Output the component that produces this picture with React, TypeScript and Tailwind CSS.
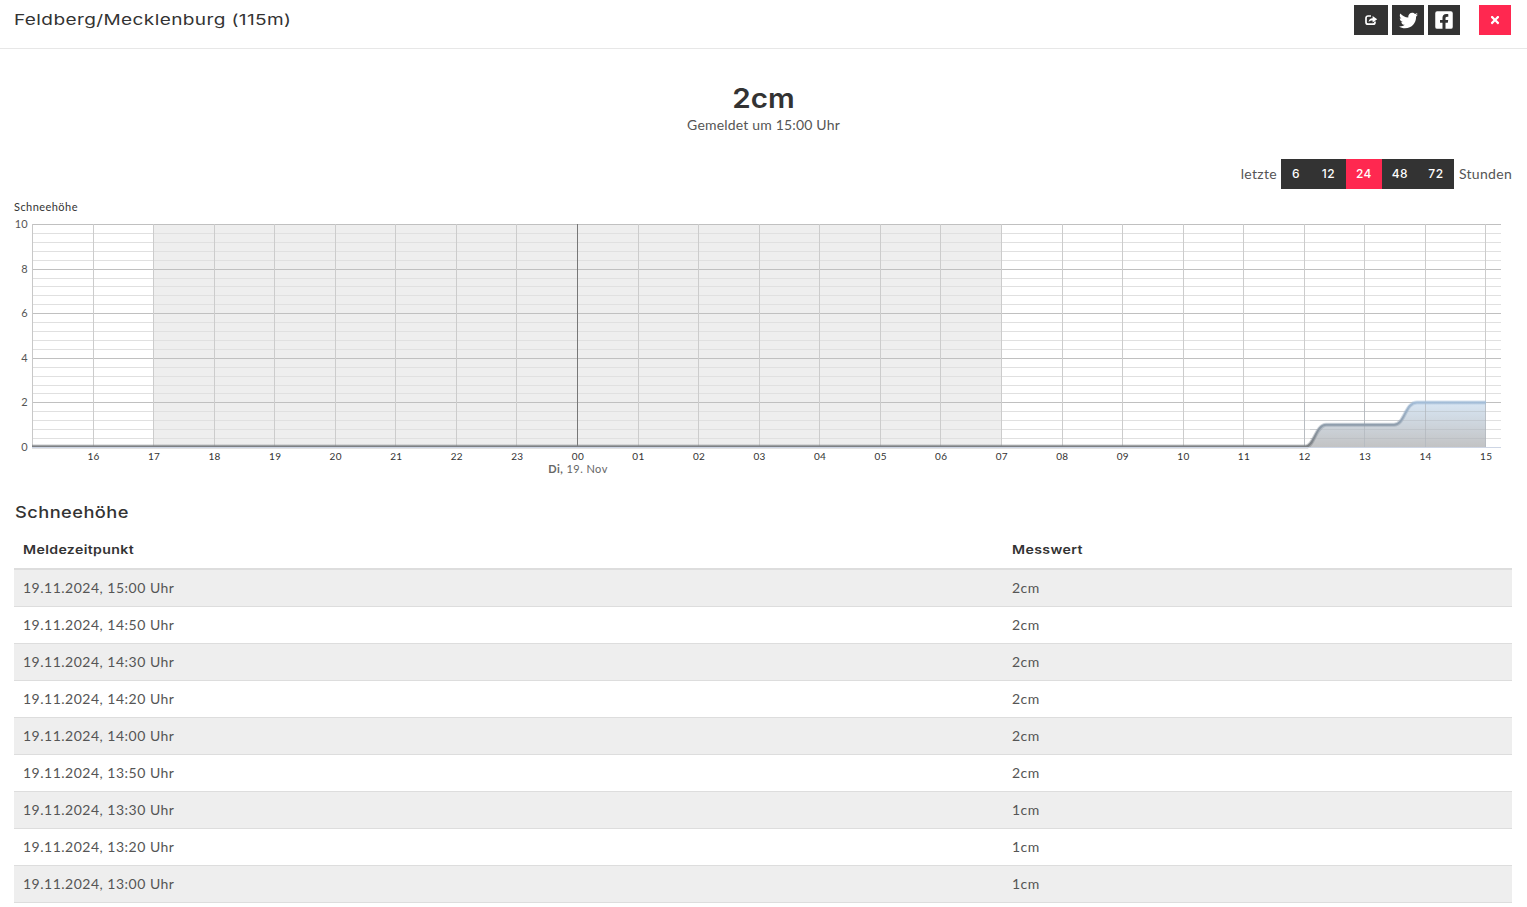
import React from "react";
import { FaTwitter, FaFacebookSquare, FaTimes } from "react-icons/fa";

const X0 = 93.5;
const LX = [93,153,214,274,335,395,456,516,577,638,698,759,819,880,940,1001,1062,1122,1183,1243,1304,1364,1425,1485];
const DX = 60.55;
const Y = (v: number) => 447 - v * 22.3;
const hours = ["16","17","18","19","20","21","22","23","00","01","02","03","04","05","06","07","08","09","10","11","12","13","14","15"];
const rows: [string, string][] = [
  ["19.11.2024, 15:00 Uhr", "2cm"],
  ["19.11.2024, 14:50 Uhr", "2cm"],
  ["19.11.2024, 14:30 Uhr", "2cm"],
  ["19.11.2024, 14:20 Uhr", "2cm"],
  ["19.11.2024, 14:00 Uhr", "2cm"],
  ["19.11.2024, 13:50 Uhr", "2cm"],
  ["19.11.2024, 13:30 Uhr", "1cm"],
  ["19.11.2024, 13:20 Uhr", "1cm"],
  ["19.11.2024, 13:00 Uhr", "1cm"],
];

function Chart() {
  const minor: number[] = [];
  for (let i = 0; i <= 25; i++) if (i % 5 !== 0) minor.push(i * 0.4);
  const line = "M32 446.5 L1306 446.5 C1314 446.5 1316 424.7 1326 424.7 L1394 424.7 C1405 424.7 1405 402.4 1417 402.4 L1486 402.4";
  return (
    <svg width={1527} height={290} viewBox="0 195 1527 290" className="block">
      <defs>
        <linearGradient id="area" gradientUnits="userSpaceOnUse" x1="0" y1="402" x2="0" y2="447">
          <stop offset="0" stopColor="#d8e6f4" />
          <stop offset="1" stopColor="#c2c3c4" />
        </linearGradient>
        <linearGradient id="stroke" gradientUnits="userSpaceOnUse" x1="0" y1="402" x2="0" y2="447">
          <stop offset="0" stopColor="#a3bdd8" />
          <stop offset="1" stopColor="#7c7f82" />
        </linearGradient>
      </defs>
      <rect x={153} y={224} width={848} height={223} fill="#eeeeee" />
      {minor.map((v) => (
        <line key={v} x1={32} x2={1501} y1={Math.round(Y(v)) + 0.5} y2={Math.round(Y(v)) + 0.5} stroke="#e0e0e0" />
      ))}
      {[0, 2, 4, 6, 8, 10].map((v) => (
        <line key={v} x1={32} x2={1501} y1={Math.round(Y(v)) + 0.5} y2={Math.round(Y(v)) + 0.5} stroke="#c0c0c0" />
      ))}
      <line x1={32.5} x2={32.5} y1={224} y2={447} stroke="#c8c8c8" />
      {hours.map((h, i) => (
        <line key={h} x1={LX[i] + 0.5} x2={LX[i] + 0.5} y1={224} y2={447} stroke={h === "00" ? "#777777" : "#cccccc"} />
      ))}
      <path d={line + " L1486 447 L32 447 Z"} fill="url(#area)" />
      {hours.slice(20).map((h, i) => (
        <line key={h} x1={LX[i + 20] + 0.5} x2={LX[i + 20] + 0.5} y1={402} y2={447} stroke="#b4b9bf" strokeOpacity={0.8} />
      ))}
      {[0.4, 0.8, 1.2, 1.6].map((v) => (
        <line key={v} x1={1310} x2={1486} y1={Math.round(Y(v)) + 0.5} y2={Math.round(Y(v)) + 0.5} stroke="#aeb3b8" strokeOpacity={0.4} />
      ))}
      <path d={line} fill="none" stroke="url(#stroke)" strokeWidth={4} strokeOpacity={0.45} />
      <path d={line} fill="none" stroke="url(#stroke)" strokeWidth={2} />
      <line x1={32} x2={1501} y1={447.5} y2={447.5} stroke="#cdd5e4" />
      <g fontFamily="Lato, sans-serif" fill="#333333">
        <text x={14} y={211} fontSize={11} letterSpacing={0.45}>Schneehöhe</text>
        {[0, 2, 4, 6, 8, 10].map((v) => (
          <text key={v} x={28} y={Y(v) + 4} fontSize={11} textAnchor="end" fill="#555555" letterSpacing={0.3}>{v}</text>
        ))}
        {hours.map((h, i) => (
          <text key={h} x={X0 + i * DX} y={460} fontSize={10} textAnchor="middle" letterSpacing={0.3}>{h}</text>
        ))}
        <text x={578} y={473} fontSize={11} textAnchor="middle" fill="#666666" letterSpacing={0.45}>
          <tspan fontWeight={700}>Di,</tspan> 19. Nov
        </text>
      </g>
    </svg>
  );
}

export default function App() {
  const heading = { fontFamily: "Inter, sans-serif" };
  return (
    <div className="h-[907px] w-[1527px] overflow-hidden bg-white text-[#333333] font-['Lato','Open_Sans',sans-serif]">
      <header className="flex h-[49px] items-start justify-between border-b border-[#e7e7e7] pr-[16px] pl-[14px]">
        <h1 style={heading} className="mt-[10px] origin-left scale-x-[1.27] text-[15px] leading-[20px] font-normal tracking-[0.3px] text-[#333333]">Feldberg/Mecklenburg (115m)</h1>
        <div className="mt-[5px] flex items-start">
          <div className="flex gap-[4px]">
            <a className="flex h-[30px] w-[34px] items-center justify-center bg-[#333333] text-white">
              <svg width="13" height="12" viewBox="0 0 13 12">
                <path d="M6 2H3a2 2 0 0 0-2 2v4.2a2 2 0 0 0 2 2h5a2 2 0 0 0 2-2V7.4" fill="none" stroke="#ffffff" strokeWidth="1.7" />
                <path d="M3.6 8C3.8 5.6 5.2 4.3 7.6 4.2V2l4.6 3.3-4.6 3.2V6.4C6 6.4 4.8 6.8 3.6 8Z" fill="#ffffff" />
              </svg>
            </a>
            <a className="flex h-[30px] w-[32px] items-center justify-center bg-[#333333] text-[19px] text-white"><FaTwitter /></a>
            <a className="flex h-[30px] w-[32px] items-center justify-center bg-[#333333] text-[20px] text-white"><FaFacebookSquare /></a>
          </div>
          <a className="ml-[19px] flex h-[30px] w-[32px] items-center justify-center bg-[#ff2850] text-[12px] text-white"><FaTimes /></a>
        </div>
      </header>

      <section className="pt-[32px] text-center">
        <div style={heading} className="scale-x-[1.1] text-[27px] leading-[36px] font-semibold">2cm</div>
        <div className="mt-[-2px] text-[14px] leading-[20px] tracking-[0.18px] text-[#555555]">Gemeldet um 15:00 Uhr</div>
      </section>

      <div className="mt-[24px] flex h-[30px] items-center justify-end pr-[15px] text-[14px] tracking-[0.3px] text-[#555555]">
        <span className="mr-[4px] -translate-y-px">letzte</span>
        <div style={heading} className="flex h-[30px] items-center text-[12px] font-medium tracking-[0.5px] text-white">
          <span className="flex h-full w-[30px] items-center justify-center bg-[#333333]">6</span>
          <span className="flex h-full w-[35px] items-center justify-center bg-[#333333]">12</span>
          <span className="flex h-full w-[36px] items-center justify-center bg-[#ff2850]">24</span>
          <span className="flex h-full w-[36px] items-center justify-center bg-[#333333]">48</span>
          <span className="flex h-full w-[36px] items-center justify-center bg-[#333333]">72</span>
        </div>
        <span className="ml-[5px] -translate-y-px">Stunden</span>
      </div>

      <div className="mt-[6px]"><Chart /></div>

      <h2 style={heading} className="mt-[16px] ml-[15px] origin-left scale-x-[1.14] text-[16px] leading-[22px] font-medium tracking-[0.4px]">Schneehöhe</h2>

      <table className="mt-[8px] ml-[14px] w-[1498px] table-fixed border-collapse text-[14px] tracking-[0.5px] text-[#555555]">
        <thead>
          <tr className="h-[38px] border-b-2 border-[#dddddd] text-left text-[#333333]">
            <th style={heading} className="w-[989px] pl-[9px] text-[12px] font-semibold"><span className="inline-block origin-left scale-x-[1.18] tracking-[0.3px]">Meldezeitpunkt</span></th>
            <th style={heading} className="pl-[9px] text-[12px] font-semibold"><span className="inline-block origin-left scale-x-[1.18] tracking-[0.3px]">Messwert</span></th>
          </tr>
        </thead>
        <tbody>
          {rows.map(([t, v], i) => (
            <tr key={t} className={i % 2 === 0 ? "h-[37px] border-b border-[#dddddd] bg-[#eeeeee]" : "h-[37px] border-b border-[#dddddd] bg-white"}>
              <td className="pl-[9px]">{t}</td>
              <td className="pl-[9px]">{v}</td>
            </tr>
          ))}
        </tbody>
      </table>
    </div>
  );
}
